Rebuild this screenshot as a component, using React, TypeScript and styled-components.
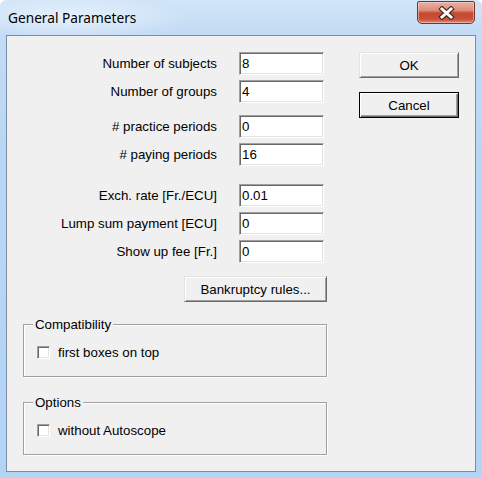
import React from 'react';
import styled, { createGlobalStyle } from 'styled-components';

const GlobalStyle = createGlobalStyle`
  html, body { margin: 0; padding: 0; background: #ffffff; }
  body { font-family: "Liberation Sans", Arial, sans-serif; }
`;

const Window = styled.div`
  width: 482px;
  height: 478px;
  box-sizing: border-box;
  display: flex;
  flex-direction: column;
  background: linear-gradient(to bottom, #d2e5f8 0px, #c4dcf5 30px, #b9d7f5 140px, #b4d4f5 100%);
  border-radius: 6px 6px 0 0;
  overflow: hidden;
`;

const TitleBar = styled.div`
  height: 35px;
  flex: none;
  display: flex;
  justify-content: space-between;
  align-items: flex-start;
  padding: 0 7px 0 8px;
  background: radial-gradient(ellipse 120px 22px at 70px 18px, rgba(255, 255, 255, 0.55), rgba(255, 255, 255, 0) 100%);
`;

const Title = styled.div`
  font-family: "Noto Sans", "Open Sans", sans-serif;
  font-size: 13.7px;
  line-height: 20px;
  color: #000;
  margin-top: 8px;
`;

const CloseButton = styled.div`
  width: 58px;
  height: 23px;
  margin-top: 1px;
  box-sizing: border-box;
  border: 1px solid #7a3127;
  border-radius: 2px 2px 5px 5px;
  background: linear-gradient(to bottom, #eab2a4 0%, #dc8c79 40%, #c64a33 52%, #c94f36 80%, #dc8770 100%);
  box-shadow: inset 0 0 0 1px rgba(255, 220, 210, 0.5);
  display: flex;
  align-items: center;
  justify-content: center;
`;

const Client = styled.div`
  margin: 0 6px;
  height: 437px;
  flex: none;
  box-sizing: border-box;
  border: 1px solid #7b8da2;
  background: #f0f0f0;
  display: flex;
  align-items: flex-start;
  padding-top: 16px;
  font-size: 13.3px;
  color: #000;
`;

const LeftColumn = styled.div`
  width: 320px;
  display: flex;
  flex-direction: column;
`;

const RightColumn = styled.div`
  margin-left: 32px;
  display: flex;
  flex-direction: column;
  gap: 14px;
`;

const Section = styled.div<{ $gap: number }>`
  display: grid;
  grid-template-columns: 210px 85px;
  column-gap: 22px;
  row-gap: 5px;
  align-items: center;
  margin-top: ${(p) => p.$gap}px;
`;

const Label = styled.div`
  text-align: right;
  line-height: 15px;
  white-space: nowrap;
`;

const EditBox = styled.div`
  height: 23px;
  box-sizing: border-box;
  background: #ffffff;
  border: 1px solid;
  border-color: #a0a0a0 #ffffff #ffffff #a0a0a0;
  box-shadow: inset 1px 1px 0 #696969, inset -1px -1px 0 #e3e3e3;
  padding-left: 2px;
  display: flex;
  align-items: center;
  line-height: 15px;
`;

const PushButton = styled.div<{ $default?: boolean; $width?: number }>`
  width: ${(p) => p.$width ?? 100}px;
  height: 26px;
  box-sizing: border-box;
  background: #f0f0f0;
  display: flex;
  align-items: center;
  justify-content: center;
  line-height: 15px;
  border: 1px solid;
  border-color: ${(p) => (p.$default ? '#000000' : '#e3e3e3 #696969 #696969 #e3e3e3')};
  box-shadow: ${(p) =>
    p.$default
      ? 'inset 1px 1px 0 #ffffff, inset -1px -1px 0 #696969, inset -2px -2px 0 #a0a0a0'
      : 'inset 1px 1px 0 #ffffff, inset -1px -1px 0 #a0a0a0'};
`;

const ButtonRow = styled.div`
  display: flex;
  justify-content: flex-end;
  margin-top: 13px;
`;

const GroupBox = styled.div<{ $gap: number }>`
  position: relative;
  margin-top: ${(p) => p.$gap}px;
  margin-left: 16px;
  width: 304px;
  height: 53px;
  box-sizing: border-box;
  border: 1px solid #a0a0a0;
  box-shadow: 1px 1px 0 #ffffff, inset 1px 1px 0 #ffffff;
  padding: 20px 0 0 13px;
`;

const GroupLegend = styled.div`
  position: absolute;
  top: -8px;
  left: 9px;
  padding: 0 2px;
  background: #f0f0f0;
  line-height: 15px;
`;

const CheckRow = styled.div`
  display: flex;
  align-items: center;
  gap: 8px;
  line-height: 15px;
`;

const CheckBox = styled.span`
  width: 13px;
  height: 13px;
  box-sizing: border-box;
  background: #ffffff;
  border: 1px solid;
  border-color: #a0a0a0 #ffffff #ffffff #a0a0a0;
  box-shadow: inset 1px 1px 0 #696969, inset -1px -1px 0 #e3e3e3;
`;

const CloseGlyph = () => (
  <svg width="17" height="14" viewBox="0 0 17 14">
    <path d="M4 3 L13 11 M13 3 L4 11" stroke="#4a2a26" strokeWidth="5.2" strokeLinecap="square" fill="none" />
    <path d="M4 3 L13 11 M13 3 L4 11" stroke="#ffffff" strokeWidth="3" strokeLinecap="square" fill="none" />
  </svg>
);

type Field = { label: string; value: string };

const Fields = ({ items, gap }: { items: Field[]; gap: number }) => (
  <Section $gap={gap}>
    {items.map((f) => (
      <React.Fragment key={f.label}>
        <Label>{f.label}</Label>
        <EditBox>{f.value}</EditBox>
      </React.Fragment>
    ))}
  </Section>
);

export default function App() {
  return (
    <>
      <GlobalStyle />
      <Window>
        <TitleBar>
          <Title>General Parameters</Title>
          <CloseButton>
            <CloseGlyph />
          </CloseButton>
        </TitleBar>
        <Client>
          <LeftColumn>
            <Fields
              gap={0}
              items={[
                { label: 'Number of subjects', value: '8' },
                { label: 'Number of groups', value: '4' },
              ]}
            />
            <Fields
              gap={12}
              items={[
                { label: '# practice periods', value: '0' },
                { label: '# paying periods', value: '16' },
              ]}
            />
            <Fields
              gap={18}
              items={[
                { label: 'Exch. rate [Fr./ECU]', value: '0.01' },
                { label: 'Lump sum payment [ECU]', value: '0' },
                { label: 'Show up fee [Fr.]', value: '0' },
              ]}
            />
            <ButtonRow>
              <PushButton $width={143}>Bankruptcy rules...</PushButton>
            </ButtonRow>
            <GroupBox $gap={22}>
              <GroupLegend>Compatibility</GroupLegend>
              <CheckRow>
                <CheckBox />
                first boxes on top
              </CheckRow>
            </GroupBox>
            <GroupBox $gap={25}>
              <GroupLegend>Options</GroupLegend>
              <CheckRow>
                <CheckBox />
                without Autoscope
              </CheckRow>
            </GroupBox>
          </LeftColumn>
          <RightColumn>
            <PushButton>OK</PushButton>
            <PushButton $default>Cancel</PushButton>
          </RightColumn>
        </Client>
      </Window>
    </>
  );
}
